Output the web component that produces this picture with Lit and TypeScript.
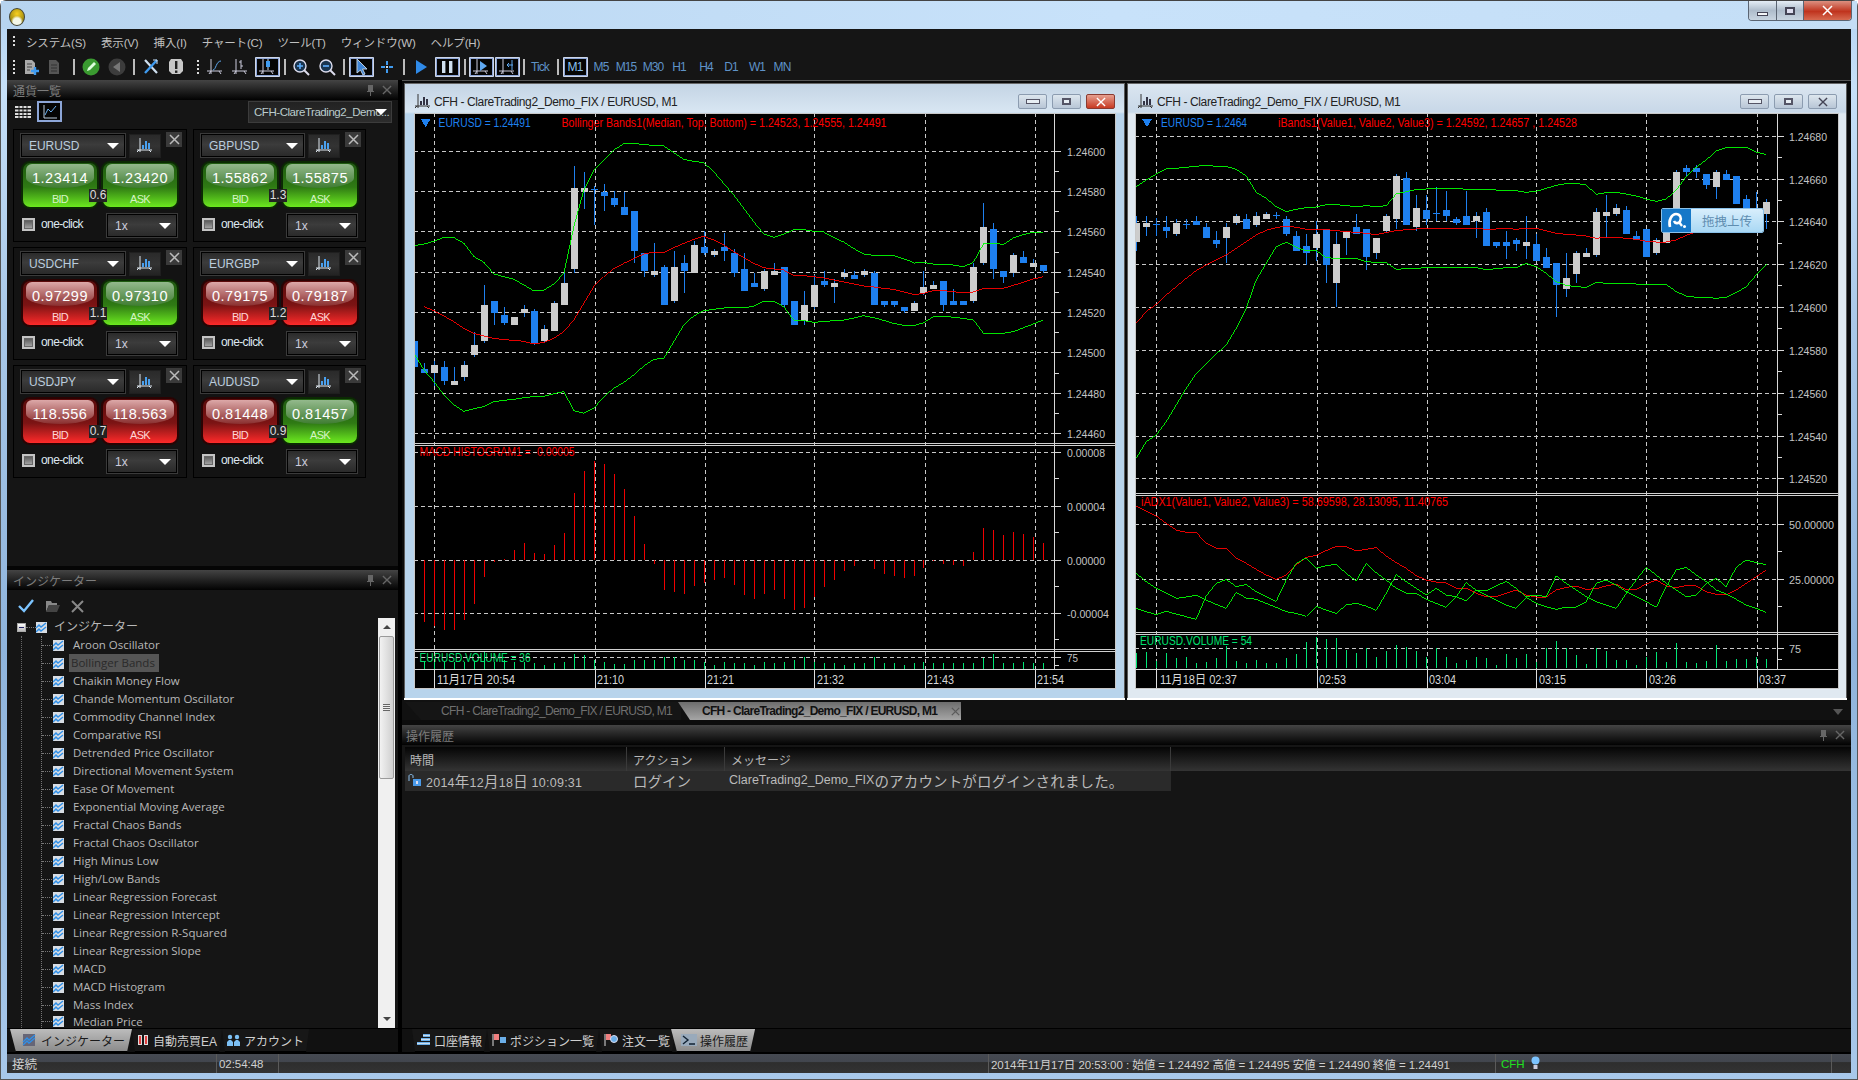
import { LitElement, html, css, svg } from "lit";
import { customElement, property } from "lit/decorators.js";

const SANS = css`"Liberation Sans","Noto Sans CJK JP",sans-serif`;

type Candle = [number, number, number, number, number];
interface Label { y: number; t: string; w: number; }
interface Cfg {
  title: string; active: boolean; vbX: number; vbW: number; x0: number; step: number; axisX: number;
  vlines: number[]; hMain: Label[]; hSub: Label[]; hVol: Label[]; ticks: number[]; seps: number[];
  candles: Candle[]; candleY: number;
  lines: { c: string; start: number; ys: number[]; base: number }[];
  hist?: number[]; histZero?: number; histBase?: number;
  vol: number[]; volBase: number; volScale: number;
  legends: { x: number; y: number; t: string; w: number; c: string }[];
  times: { x: number; t: string; w: number }[]; triX: number; labelX: number;
}

const c1: Candle[] = [[0,783,783,860,873],[0,850,868,878,880],[1,842,855,878,918],[0,843,862,903,915],[1,862,903,915,915],[1,843,855,890,903],[1,755,795,825,832],[1,615,675,783,789],[0,663,663,699,735],[0,681,705,729,735],[1,711,711,735,735],[1,675,687,699,711],[0,687,693,790,795],[1,735,747,783,789],[1,663,669,753,753],[1,580,609,675,675],[1,258,325,567,579],[1,276,325,335,387],[0,318,328,331,435],[0,312,335,347,393],[0,333,353,375,381],[0,335,381,405,405],[0,393,393,513,549],[0,519,519,573,591],[1,489,573,585,591],[0,555,561,675,675],[1,513,561,663,669],[0,525,549,573,639],[1,483,495,579,579],[0,453,501,519,525],[1,507,513,525,531],[0,459,501,513,543],[0,507,519,579,591],[0,519,567,633,633],[0,579,609,621,621],[1,567,573,627,633],[1,549,573,585,585],[0,561,561,675,681],[0,663,663,735,735],[1,633,675,723,735],[1,585,615,681,687],[0,573,603,615,621],[1,597,609,621,669],[1,567,579,591,597],[0,573,585,597,597],[1,567,573,585,591],[0,573,579,675,675],[0,663,663,675,681],[0,663,663,675,681],[0,681,681,693,699],[1,663,669,693,693],[1,573,621,639,645],[1,603,615,627,627],[0,603,603,675,693],[0,627,663,675,675],[0,663,663,675,675],[1,549,561,663,669],[1,369,441,549,555],[0,429,447,567,597],[0,573,573,591,609],[1,519,525,579,591],[0,513,531,549,549],[1,537,549,561,561],[0,555,555,573,579]];
const c2: Candle[] = [[1,408,429,485,512],[1,408,429,441,468],[0,414,432,435,468],[0,408,441,453,474],[1,417,429,462,468],[0,417,432,435,447],[0,408,423,435,435],[0,429,441,474,474],[0,453,480,492,504],[1,429,441,474,549],[1,402,408,429,435],[0,402,417,447,447],[1,396,408,435,441],[1,396,402,417,417],[0,396,405,408,417],[0,408,417,462,468],[0,453,468,513,513],[0,462,498,519,555],[1,424,462,504,543],[0,447,447,555,609],[1,456,492,609,682],[1,453,456,474,525],[0,402,441,462,462],[0,447,447,531,570],[1,474,474,519,537],[1,402,408,453,459],[1,282,288,417,447],[0,276,294,435,435],[1,345,384,441,453],[0,345,390,417,435],[0,321,399,402,423],[0,333,390,408,423],[0,411,417,429,435],[0,333,408,435,435],[1,396,408,423,474],[0,384,396,498,498],[0,486,486,498,504],[0,453,486,498,537],[0,474,480,492,513],[1,408,486,498,537],[0,462,492,543,543],[0,504,531,564,564],[0,549,549,615,710],[1,519,594,627,651],[1,513,519,582,609],[1,504,519,531,531],[1,384,396,525,531],[1,345,396,408,474],[1,372,384,402,408],[0,378,390,462,462],[0,453,468,480,480],[0,447,447,531,531],[1,474,480,519,525],[1,430,430,490,490],[1,270,276,400,400],[0,255,264,276,288],[0,255,264,276,294],[0,282,282,315,327],[1,270,276,321,357],[0,270,282,300,300],[0,288,288,372,372],[0,345,357,400,400],[0,336,385,400,400],[1,357,366,402,447]];

const W1: Cfg = {
  title: "CFH - ClareTrading2_Demo_FIX / EURUSD, M1", active: true, vbX: 414, vbW: 702, x0: 414, step: 9.99, axisX: 1054,
  vlines: [434, 595, 705, 814, 925, 1035],
  hMain: [[151,"1.24600"],[191,"1.24580"],[231,"1.24560"],[272,"1.24540"],[312,"1.24520"],[352,"1.24500"],[393,"1.24480"],[433,"1.24460"]].map(([y,t]) => ({ y: y as number, t: t as string, w: 38 })),
  hSub: [{ y: 452, t: "0.00008", w: 38 }, { y: 506, t: "0.00004", w: 38 }, { y: 560, t: "0.00000", w: 38 }, { y: 613, t: "-0.00004", w: 42 }],
  hVol: [{ y: 657, t: "75", w: 11 }],
  ticks: [171,211,252,292,332,373,413,478,532,586,639,665], seps: [443, 649],
  candles: c1, candleY: 80,
  lines: [
    { c: "#00ff00", start: 0, base: 80, ys: [497,492,484,472,473,490,530,547,582,590,598,615,633,630,612,580,440,330,270,240,210,191,190,194,196,198,218,238,244,248,275,310,345,385,425,462,472,463,449,449,454,456,472,486,505,522,526,526,527,537,549,547,552,553,555,560,547,492,490,493,474,464,456,457] },
    { c: "#00ff00", start: 0, base: 80, ys: [820,870,905,945,975,994,986,980,965,961,958,953,950,949,941,935,992,1000,985,950,925,907,885,858,838,835,785,735,708,692,688,684,682,684,678,664,664,680,720,722,727,725,722,720,714,707,713,721,730,736,736,728,710,708,712,715,720,760,761,760,755,743,732,720] },
    { c: "#ff0000", start: 1, base: 80, ys: [680,692,708,725,745,760,768,775,779,781,784,792,787,775,755,720,670,620,590,566,550,536,522,516,518,503,490,478,469,480,495,515,533,550,563,567,570,586,587,590,594,600,606,612,618,621,625,628,636,644,640,632,632,635,639,636,626,624,625,616,607,597,590] },
  ],
  hist: [537,575,587,599,599,570,521,441,395,387,360,339,369,372,345,309,189,123,93,101,132,177,258,342,402,480,486,491,468,460,450,444,465,495,507,492,480,507,540,534,501,471,450,423,408,390,417,432,438,444,438,414,393,402,405,408,366,294,300,315,306,312,321,339], histZero: 390, histBase: 430,
  vol: [700,695,697,697,697,697,693,666,695,690,695,695,700,705,700,697,672,674,690,695,702,702,690,690,690,682,682,690,690,695,705,695,700,700,705,695,700,695,690,682,695,700,700,705,700,700,682,700,700,705,698,695,700,700,700,700,700,684,672,700,698,696,700,700], volBase: 717, volScale: 430,
  legends: [
    { x: 438.6, y: 123, t: "EURUSD = 1.24491", w: 92, c: "#1e80f0" },
    { x: 561.5, y: 123, t: "Bollinger Bands1(Median, Top, Bottom) = 1.24523, 1.24555, 1.24491", w: 325, c: "#ff0000" },
    { x: 419.6, y: 452, t: "MACD HISTOGRAM1 = -0.00005", w: 155, c: "#ff0000" },
    { x: 419.6, y: 658, t: "EURUSD.VOLUME = 36", w: 111, c: "#00e070" },
  ],
  times: [{ x: 437, t: "11月17日 20:54", w: 78 }, { x: 597, t: "21:10", w: 27 }, { x: 707, t: "21:21", w: 27 }, { x: 817, t: "21:32", w: 27 }, { x: 927, t: "21:43", w: 27 }, { x: 1037, t: "21:54", w: 27 }],
  triX: 425.6, labelX: 1067,
};

const W2: Cfg = {
  title: "CFH - ClareTrading2_Demo_FIX / EURUSD, M1", active: false, vbX: 1135, vbW: 704, x0: 1136.2, step: 10, axisX: 1777,
  vlines: [1156, 1317, 1427, 1536, 1646, 1757],
  hMain: [[136,"1.24680"],[179,"1.24660"],[221,"1.24640"],[264,"1.24620"],[307,"1.24600"],[350,"1.24580"],[393,"1.24560"],[436,"1.24540"],[478,"1.24520"]].map(([y,t]) => ({ y: y as number, t: t as string, w: 38 })),
  hSub: [{ y: 524, t: "50.00000", w: 45 }, { y: 579, t: "25.00000", w: 45 }],
  hVol: [{ y: 648, t: "75", w: 12 }],
  ticks: [157,200,243,285,328,371,414,457,551,606,659], seps: [493, 632],
  candles: c2, candleY: 80,
  lines: [
    { c: "#00ff00", start: 0, base: 80, ys: [320,300,282,267,265,262,259,256,259,259,268,288,337,355,380,395,388,383,381,374,374,377,380,377,380,377,342,335,329,327,325,325,325,328,328,328,330,330,332,337,334,325,316,311,310,315,343,338,337,342,348,357,364,357,330,290,262,240,213,203,202,202,216,224] },
    { c: "#00ff00", start: 0, base: 80, ys: [1135,1085,1065,1025,975,925,880,850,822,795,745,685,600,550,500,487,502,512,512,533,535,535,535,545,547,548,568,566,565,563,563,563,563,563,563,569,566,563,563,550,560,580,605,616,620,622,607,610,610,611,612,613,613,613,635,648,652,652,655,652,638,620,585,553] },
    { c: "#ff0000", start: 0, base: 80, ys: [730,695,673,645,620,595,572,555,540,525,505,485,465,451,443,438,442,448,449,449,452,455,457,460,464,458,452,449,447,445,445,445,445,445,445,448,447,445,448,445,445,452,460,463,465,468,475,472,472,475,478,484,486,486,480,466,456,440,420,405,395,390,385] },
    { c: "#ff0000", start: 0, base: 480, ys: [78,93,108,130,150,157,157,190,204,204,235,250,268,285,298,285,255,232,226,212,199,200,213,208,203,228,248,265,287,300,306,309,325,325,340,350,350,340,330,345,351,351,330,322,318,328,326,318,312,330,328,312,300,318,323,317,318,335,343,345,330,310,290,270] },
    { c: "#00ff00", start: 0, base: 480, ys: [280,305,325,340,355,351,346,360,373,385,337,354,358,370,382,395,400,409,379,390,400,375,370,378,391,340,284,305,325,345,325,345,350,363,330,345,360,375,385,352,370,380,388,381,381,365,310,300,315,335,350,365,382,320,270,262,285,305,330,342,358,375,385,397] },
    { c: "#00ff00", start: 0, base: 480, ys: [385,395,404,394,402,410,418,348,310,298,320,314,335,350,364,300,250,234,265,257,253,280,303,251,278,300,325,340,340,358,370,382,350,308,330,332,318,304,325,350,345,350,288,310,330,350,365,375,385,340,300,262,285,310,330,350,346,310,295,320,262,240,248,254] },
  ],
  vol: [520,515,543,518,533,530,549,546,533,498,543,548,540,548,548,533,521,486,470,477,474,510,520,505,530,512,495,502,512,530,505,530,548,540,530,535,555,522,533,522,545,505,483,503,525,552,503,512,540,540,555,530,515,545,490,545,549,543,495,543,538,537,530,537], volBase: 565, volScale: 480,
  legends: [
    { x: 1161, y: 123, t: "EURUSD = 1.2464", w: 86, c: "#1e80f0" },
    { x: 1278, y: 123, t: "iBands1(Value1, Value2, Value3) = 1.24592, 1.24657 , 1.24528", w: 299, c: "#ff0000" },
    { x: 1141, y: 502, t: "iADX1(Value1, Value2, Value3) = 58.69598, 28.13095, 11.40765", w: 307, c: "#ff0000" },
    { x: 1140, y: 641, t: "EURUSD.VOLUME = 54", w: 112, c: "#00e070" },
  ],
  times: [{ x: 1160, t: "11月18日 02:37", w: 77 }, { x: 1319, t: "02:53", w: 27 }, { x: 1429, t: "03:04", w: 27 }, { x: 1539, t: "03:15", w: 27 }, { x: 1649, t: "03:26", w: 27 }, { x: 1759, t: "03:37", w: 27 }],
  triX: 1147, labelX: 1789,
};

const barIcon = (axis: string, bars: string) => html`<svg width="18" height="18" viewBox="0 0 18 18"><path d="M4 1v14M1 13h15" stroke=${axis} fill="none"/><path d="M7 12V8M10 12V4M13 12V6" stroke=${bars} stroke-width="2" fill="none"/><path d="M1 15l2-2M15 15l-2-2" stroke=${axis} fill="none"/></svg>`;
const xIcon = (col: string, s = 11) => html`<svg width=${s} height=${s} viewBox="0 0 11 11"><path d="M1 1l9 9M10 1l-9 9" stroke=${col} stroke-width="1.5" fill="none"/></svg>`;
const pinIcon = html`<svg width="9" height="12" viewBox="0 0 9 12"><path d="M2 1h5v6h1v1H1V7h1zM4 8h1v4H4z" fill="#666"/></svg>`;
const waveIcon = html`<svg width="11" height="11" viewBox="0 0 11 11"><rect width="11" height="11" fill="#d8dde4"/><path d="M0 6l3-3 2 2 5-4M0 10l3-3 2 2 5-4" stroke="#2f8fe8" stroke-width="1.4" fill="none"/></svg>`;
const ax = (inner: unknown) => svg`<path d="M5 1v15M1 13h15M3 16l2-3M15 16l-2-3" stroke="#ccd" fill="none"/>${inner}`;

function toolIcon(k: string) {
  const body: Record<string, unknown> = {
    grip: svg`<path d="M9 2v2M9 6v2M9 10v2M9 14v2" stroke="#ddd" stroke-width="2"/>`,
    new: svg`<path d="M3 2h7l3 3v11H3z" fill="#aaa"/><path d="M5 6h5M5 9h5M5 12h3" stroke="#444"/><path d="M13 9v8M9 13h8" stroke="#3f9bf0" stroke-width="2.4"/>`,
    doc: svg`<path d="M4 2h7l3 3v11H4z" fill="#555"/><path d="M6 7h6M6 10h6M6 13h6" stroke="#333"/>`,
    green: svg`<circle cx="9" cy="9" r="8.5" fill="#3a9a30"/><path d="M5 13l1-3 6-6 2 2-6 6z" fill="#dfd"/>`,
    gray: svg`<circle cx="9" cy="9" r="8.5" fill="#3c3c3c"/><path d="M12 4v10L5 9z" fill="#777"/>`,
    tools: svg`<path d="M3 2l12 13" stroke="#cfe0f0" stroke-width="2.2"/><path d="M15 2L3 15" stroke="#3f9bf0" stroke-width="2.4"/><path d="M11 2l4 0 0 4" stroke="#cfe0f0" fill="none"/>`,
    excl: svg`<path d="M4 1h10l2 3v9l-3 3H5l-3-3V4z" fill="#c8c8c8"/><rect x="8" y="3" width="2.4" height="8" fill="#222"/><rect x="8" y="12.500" width="2.4" height="2.4" fill="#222"/>`,
    line: ax(svg`<path d="M7 12c3 0 3-9 8-9" stroke="#5fa8f0" fill="none"/>`),
    bar: ax(svg`<path d="M10 2v9M8 4h2M10 8h2" stroke="#ccd" fill="none"/>`),
    candle: ax(svg`<path d="M10 1v11" stroke="#cde" /><rect x="8" y="3" width="4" height="6" fill="#3f9bf0"/>`),
    zin: svg`<circle cx="8" cy="8" r="6" fill="#1a3550" stroke="#dde" stroke-width="1.4"/><path d="M8 5v6M5 8h6" stroke="#5fb0ff" stroke-width="1.6"/><path d="M12 12l5 5" stroke="#dde" stroke-width="2"/>`,
    zout: svg`<circle cx="8" cy="8" r="6" fill="#1a3550" stroke="#dde" stroke-width="1.4"/><path d="M5 8h6" stroke="#5fb0ff" stroke-width="1.6"/><path d="M12 12l5 5" stroke="#dde" stroke-width="2"/>`,
    cursor: svg`<path d="M5 1v14l3.5-3 2.5 5 2-1-2.5-5H15z" fill="#3f86d8" stroke="#bcd"/>`,
    cross: svg`<path d="M9 3v4M9 11v4M3 9h4M11 9h4" stroke="#3f9bf0" stroke-width="2"/><rect x="8" y="8" width="2" height="2" fill="#cde"/>`,
    play: svg`<path d="M4 2l11 7-11 7z" fill="#2f8ae8"/>`,
    pause: svg`<rect x="4" y="3" width="3.4" height="12" fill="#cfe0f0"/><rect x="11" y="3" width="3.4" height="12" fill="#cfe0f0"/>`,
    step: ax(svg`<path d="M8 3l7 5-7 5z" fill="#5fa8f0"/>`),
    step2: ax(svg`<path d="M15 7H9M11 5L9 7l2 2M14 2v10" stroke="#5fa8f0" fill="none"/>`),
  };
  return html`<svg width="18" height="18" viewBox="0 0 18 18">${body[k]}</svg>`;
}

@customElement("chart-window")
class ChartWindow extends LitElement {
  @property({ attribute: false }) cfg!: Cfg;
  static styles = css`
    :host { display: block; }
    .win { height: 615px; box-sizing: border-box; display: flex; flex-direction: column; border: 1px solid #5a5a5a; border-top-color: #666; border-bottom: 0; background: linear-gradient(#dbe6f0, #c8d8e8 28px, #e0e9f1 30px); box-shadow: 0 2px 0 #fff; }
    .win.active { background: linear-gradient(#c4d4e4, #d8e6f2 28px, #b8d4ec 30px); }
    .tb { height: 29px; flex: none; display: flex; align-items: center; font: 12px ${SANS}; color: #222; padding-left: 9px; gap: 2px; padding-right: 9px; white-space: nowrap; }
    .tb .ttl { flex: 1; letter-spacing: -.38px; padding-top: 6px; }
    .tb svg { margin-top: 6px; }
    .btn { width: 29px; height: 15px; margin: 6px 0 0 3px; border: 1px solid #8c9cb0; border-radius: 2px; background: linear-gradient(#dde6ee, #b8c6d6); display: flex; align-items: center; justify-content: center; box-sizing: border-box; }
    .btn.red { background: linear-gradient(#e6a090, #c83a22); border-color: #8a3a30; }
    .btn svg { margin: 0; }
    .glyph-min { width: 12px; height: 3px; background: #e8eef4; border: 1px solid #556; }
    .glyph-max { width: 9px; height: 7px; border: 2px solid #556; background: #e8eef4; box-sizing: border-box; }
    .plot { position: relative; line-height: 0; margin: 0 9px 9px 9px; }
    .inact .plot { margin: 0 7px 9px 7px; }
    svg.chart { display: block; background: #000; }
    text { font-family: ${SANS}; font-size: 12.5px; }
    text.axl { font-size: 11.5px; }
  `;
  render() {
    const c = this.cfg;
    const top = 113, bot = 689, base = 669;
    const xAt = (i: number) => c.x0 + i * c.step;
    const dash = "4 3";
    const labels = [...c.hMain, ...c.hSub, ...c.hVol];
    return html`<div class="win ${c.active ? "active" : "inact"}">
      <div class="tb">${barIcon("#333", "#334")}<span class="ttl">${c.title}</span>
        <span class="btn"><span class="glyph-min"></span></span><span class="btn"><span class="glyph-max"></span></span>
        <span class="btn ${c.active ? "red" : ""}">${xIcon(c.active ? "#fff" : "#445", 10)}</span></div>
      <div class="plot">
        <svg class="chart" width=${c.vbW} height="576" viewBox="${c.vbX} ${top} ${c.vbW} 576" shape-rendering="crispEdges">
          ${c.legends.map((l) => svg`<text x=${l.x} y=${l.y + 4} fill=${l.c} textLength=${l.w} lengthAdjust="spacingAndGlyphs">${l.t}</text>`)}
          <path d="M${c.triX - 5} ${119}h10l-5 8z" fill="#1e80f0"/>
          ${labels.map((l) => svg`<path d="M${c.vbX} ${l.y + .5}H${c.axisX}" stroke="#c8c8c8" stroke-dasharray=${dash}/>`)}
          ${c.vlines.map((x) => svg`<path d="M${x + .5} ${top}V${base}" stroke="#c8c8c8" stroke-dasharray=${dash}/><path d="M${x + .5} ${base}V${bot}" stroke="#ddd"/>`)}
          ${c.candles.map((k, i) => {
            const x = Math.round(xAt(i)), Y = (z: number) => c.candleY + z / 3;
            const col = k[0] ? "#cccccc" : "#1e80f0";
            return svg`<path d="M${x + .5} ${Y(k[1])}V${Y(k[4])}" stroke="#1e80f0"/><rect x=${x - 3} y=${Y(k[2])} width="7" height=${Math.max(1, (k[3] - k[2]) / 3)} fill=${col}/>`;
          })}
          ${c.lines.map((l) => svg`<polyline fill="none" stroke=${l.c} stroke-width="0.9" points=${l.ys.map((y, i) => `${xAt(i + l.start)},${l.base + y / 3}`).join(" ")}/>`)}
          ${c.hist ? c.hist.map((y, i) => {
            const x = Math.round(xAt(i)) + .5, b = c.histBase!;
            return svg`<path d="M${x} ${b + c.histZero! / 3}V${b + y / 3}" stroke="#f00000"/>`;
          }) : ""}
          ${c.vol.map((y, i) => svg`<path d="M${Math.round(xAt(i)) + .5} ${c.volScale + c.volBase / 3}V${c.volScale + y / 3}" stroke="#00e676"/>`)}
          ${c.seps.map((y) => svg`<path d="M${c.vbX} ${y + .5}H${c.vbX + c.vbW}M${c.vbX} ${y + 2.5}H${c.vbX + c.vbW}" stroke="#d0d0d0"/>`)}
          <path d="M${c.vbX} ${base + .5}H${c.vbX + c.vbW}" stroke="#d8d8d8"/>
          <path d="M${c.axisX + .5} ${top}V${base}" stroke="#d8d8d8"/>
          ${labels.map((l) => svg`<path d="M${c.axisX} ${l.y + .5}h7" stroke="#d8d8d8"/><text class="axl" x=${c.labelX} y=${l.y + 4.5} fill="#c4c4c4" textLength=${l.w} lengthAdjust="spacingAndGlyphs">${l.t}</text>`)}
          ${c.ticks.map((y) => svg`<path d="M${c.axisX} ${y + .5}h5" stroke="#d8d8d8"/>`)}
          ${c.times.map((t) => svg`<text x=${t.x} y="684" fill="#d8d8d8" textLength=${t.w} lengthAdjust="spacingAndGlyphs">${t.t}</text>`)}
          <rect x=${c.vbX + .5} y=${top + .5} width=${c.vbW - 1} height="575" fill="none" stroke="#c8c8c8"/>
        </svg>
        <slot></slot>
      </div>
    </div>`;
  }
}

@customElement("pair-card")
class PairCard extends LitElement {
  @property() pair = "";
  @property() bid = "";
  @property() ask = "";
  @property() spread = "";
  @property() bidc = "green";
  @property() askc = "green";
  static styles = css`
    :host { display: block; }
    .card { height: 113px; box-sizing: border-box; border: 1px solid #000; background: #131313; padding: 4px 4px 0 7px; position: relative; }
    .r1 { display: flex; align-items: flex-start; }
    .sel { box-sizing: border-box; height: 23px; border: 1px solid #000; outline: 1px solid #3a3a3a; outline-offset: 0; background: linear-gradient(#2b2b2b, #3c3c3c 45%, #2a2a2a); color: #bcd; font: 12px ${SANS}; display: flex; align-items: center; justify-content: space-between; padding: 0 5px 0 7px; }
    .sel.a { width: 104px; letter-spacing: -.05px; }
    .sel.b { width: 70px; margin-top: 0; color: #ccd; }
    .arrow { width: 0; height: 0; border-left: 6px solid transparent; border-right: 6px solid transparent; border-top: 6px solid #fff; }
    .cb { width: 32px; height: 24px; margin-left: 4px; background: linear-gradient(#2a2a2a, #333 50%, #232323); border: 1px solid #1f1f1f; box-sizing: border-box; display: flex; align-items: center; justify-content: center; }
    .x { width: 16px; height: 15px; margin: -2px 0 0 5px; background: #3a3a3a; display: flex; align-items: center; justify-content: center; }
    .r2 { display: flex; gap: 6px; margin: 5px 0 0 2px; position: relative; }
    .p { width: 74px; height: 44px; border-radius: 7px; position: relative; overflow: hidden; color: #fff; display: flex; flex-direction: column; align-items: center; }
    .p.green { background: linear-gradient(#1f5a10, #2f7a14 55%, #6cea1f); box-shadow: 0 0 0 2px #0b2a03; }
    .p.red { background: linear-gradient(#5a0a0a, #7c1414 55%, #ff2a2a); box-shadow: 0 0 0 2px #2a0303; }
    .p::before { content: ""; position: absolute; left: 3px; right: 3px; top: 1px; height: 24px; border-radius: 6px 6px 50% 50% / 6px 6px 10px 10px; }
    .p.green::before { background: linear-gradient(#93b98c, #3f7d32); }
    .p.red::before { background: linear-gradient(#dca8a8, #8a2f2f); }
    .v { position: relative; font: 14.5px ${SANS}; letter-spacing: .5px; margin-top: 7px; line-height: 17px; }
    .l { position: relative; font: 11px ${SANS}; letter-spacing: -.7px; margin-top: 6px; line-height: 12px; }
    .p.green .l { color: #d5f5c5; }
    .p.red .l { color: #ffd6d6; }
    .sp { position: absolute; left: 66px; top: 26px; width: 18px; height: 13px; background: #222; color: #ddd; font: 12px/13px ${SANS}; text-align: center; }
    .r3 { display: flex; align-items: center; margin: 7px 0 0 1px; }
    .chk { width: 13px; height: 13px; box-sizing: border-box; border: 2px solid #c4c4c4; background: linear-gradient(#555, #aaa); outline: 1px solid #666; outline-offset: -3px; margin-top: -3px; }
    .one { color: #dfe8f0; font: 12px ${SANS}; margin: -3px 0 0 6px; width: 66px; letter-spacing: -.6px; }
  `;
  render() {
    return html`<div class="card">
      <div class="r1"><div class="sel a"><span>${this.pair}</span><span class="arrow"></span></div>
        <div class="cb">${barIcon("#dfe8f0", "#4aa0ee")}</div><div class="x">${xIcon("#bbb")}</div></div>
      <div class="r2">
        <div class="p ${this.bidc}"><span class="v">${this.bid}</span><span class="l">BID</span></div>
        <div class="p ${this.askc}"><span class="v">${this.ask}</span><span class="l">ASK</span></div>
        <span class="sp">${this.spread}</span>
      </div>
      <div class="r3"><span class="chk"></span><span class="one">one-click</span><div class="sel b"><span>1x</span><span class="arrow"></span></div></div>
    </div>`;
  }
}

const PAIRS = [
  ["EURUSD","1.23414","1.23420","0.6","green","green"],
  ["GBPUSD","1.55862","1.55875","1.3","green","green"],
  ["USDCHF","0.97299","0.97310","1.1","red","green"],
  ["EURGBP","0.79175","0.79187","1.2","red","red"],
  ["USDJPY","118.556","118.563","0.7","red","red"],
  ["AUDUSD","0.81448","0.81457","0.9","red","green"],
];
const INDICATORS = ["Aroon Oscillator","Bollinger Bands","Chaikin Money Flow","Chande Momentum Oscillator","Commodity Channel Index","Comparative RSI","Detrended Price Oscillator","Directional Movement System","Ease Of Movement","Exponential Moving Average","Fractal Chaos Bands","Fractal Chaos Oscillator","High Minus Low","High/Low Bands","Linear Regression Forecast","Linear Regression Intercept","Linear Regression R-Squared","Linear Regression Slope","MACD","MACD Histogram","Mass Index","Median Price"];
const MENU = ["システム(S)","表示(V)","挿入(I)","チャート(C)","ツール(T)","ウィンドウ(W)","ヘルプ(H)"];
type Tool = { x: number; k?: string; t?: string; a?: boolean; sep?: boolean };
const TOOLS: Tool[] = [
  { x: 14, k: "grip" },{ x: 31, k: "new" },{ x: 54, k: "doc" },{ x: 74, sep: true },{ x: 91, k: "green" },{ x: 117, k: "gray" },{ x: 134, sep: true },{ x: 151, k: "tools" },{ x: 176, k: "excl" },{ x: 198, k: "grip" },{ x: 215, k: "line" },{ x: 240, k: "bar" },{ x: 267, k: "candle", a: true },{ x: 285, sep: true },{ x: 301, k: "zin" },{ x: 327, k: "zout" },{ x: 344, sep: true },{ x: 361, k: "cursor", a: true },{ x: 387, k: "cross" },{ x: 404, sep: true },{ x: 421, k: "play" },{ x: 447, k: "pause", a: true },{ x: 465, sep: true },{ x: 481, k: "step", a: true },{ x: 507, k: "step2", a: true },{ x: 524, sep: true },{ x: 540, t: "Tick" },{ x: 558, sep: true },{ x: 575, t: "M1", a: true },{ x: 601, t: "M5" },{ x: 626, t: "M15" },{ x: 653, t: "M30" },{ x: 679, t: "H1" },{ x: 706, t: "H4" },{ x: 731, t: "D1" },{ x: 757, t: "W1" },{ x: 782, t: "MN" },
];

@customElement("app-root")
class AppRoot extends LitElement {
  static styles = css`
    :host { display: block; width: 1858px; height: 1080px; overflow: hidden; font-family: ${SANS}; }
    .frame { width: 1858px; height: 1080px; box-sizing: border-box; display: flex; flex-direction: column; border-top: 1px solid #444; border-left: 1px solid #555; border-right: 1px solid #555; border-bottom: 1px solid #555; border-radius: 6px 6px 0 0; background: linear-gradient(#b4d4f2, #c6e0f8 8%, #a9c8e8 30%, #8fb4dc 60%, #a8c8ea); }
    .cap { height: 28px; flex: none; display: flex; justify-content: space-between; align-items: flex-start; padding-left: 8px; background: linear-gradient(90deg, #b7d4ef, #c8e2fa 60%, #c4def6); }
    .orb { width: 16px; height: 18px; margin-top: 7px; border-radius: 50%; background: radial-gradient(circle at 50% 80%, #f4f8e8 0 26%, transparent 42%), radial-gradient(circle at 50% 30%, #f8d020, #8a7a10 78%); border: 1px solid #443; box-sizing: border-box; }
    .capbtns { display: flex; margin-right: 5px; height: 19px; border: 1px solid #5a6472; border-top: 0; border-radius: 0 0 4px 4px; overflow: hidden; }
    .cb { height: 19px; display: flex; align-items: center; justify-content: center; box-sizing: border-box; background: linear-gradient(#e4edf5, #aebccb 50%, #c8d4e0); border-right: 1px solid #5a6472; }
    .cb.mn { width: 28px; } .cb.mx { width: 27px; }
    .cb.cl { width: 47px; border: 0; background: linear-gradient(#dc9080, #c0341e 55%, #d66a50); }
    .g1 { width: 11px; height: 4px; background: #f4f6f8; border: 1px solid #445; box-sizing: border-box; margin-top: 6px; }
    .g2 { width: 10px; height: 8px; background: #dde; border: 2px solid #445; box-sizing: border-box; }
    .client { margin: 0 6px 0 6px; height: 1043px; flex: none; background: #000; display: flex; flex-direction: column; color: #bbb; }
    .menu { height: 25px; flex: none; background: #151515; display: flex; align-items: center; gap: 15px; padding-left: 19px; font-size: 11.5px; letter-spacing: -.15px; color: #c0c0c0; position: relative; white-space: nowrap; }
    .menu .gr { width: 2px; height: 12px; position: absolute; left: 6px; top: 7px; background: repeating-linear-gradient(#ddd 0 2px, transparent 2px 4px); }
    .tool { height: 26px; flex: none; background: #151515; display: flex; align-items: center; white-space: nowrap; }
    .ti { display: flex; align-items: center; justify-content: center; flex: none; height: 20px; box-sizing: border-box; }
    .ti.a { border: 2px solid #8da6d8; outline: 1px solid #cfd6e6; outline-offset: -1px; background: #050505; border-radius: 1px; }
    .ti.sep { width: 2px; height: 16px; background: #bbb; }
    .ti.txt { color: #5f93c8; font-size: 12px; letter-spacing: -.9px; }
    .ti.txt.a { color: #8cc0ee; }
    .main { height: 973px; flex: none; display: grid; grid-template-columns: 391px 1fr; column-gap: 4px; }
    .col { display: flex; flex-direction: column; min-width: 0; }
    .ph { height: 20px; flex: none; display: flex; align-items: center; padding: 0 6px; gap: 7px; font-size: 12px; color: #7d7d7d; background: linear-gradient(#444, #1f1f1f 55%, #020202); }
    .ph .name { flex: 1; }
    .panelA { height: 486px; flex: none; background: #151515; display: flex; flex-direction: column; }
    .bar { height: 29px; flex: none; display: flex; align-items: flex-start; padding: 1px 6px 0 8px; gap: 6px; box-sizing: border-box; }
    .bar > svg { margin-top: 5px; }
    .active-box { width: 25px; height: 21px; border: 2px solid #8da6d8; box-sizing: border-box; background: #050505; display: flex; align-items: center; justify-content: center; }
    .wide { margin-left: auto; width: 144px; height: 22px; box-sizing: border-box; border: 1px solid #3c3c3c; background: linear-gradient(#222, #2c2c2c); color: #bcc; font-size: 11.5px; letter-spacing: -.45px; padding: 0 2px 0 5px; display: flex; align-items: center; position: relative; white-space: nowrap; }
    .wide .arw { position: absolute; right: 4px; top: 7px; width: 0; height: 0; border-left: 6px solid transparent; border-right: 6px solid transparent; border-top: 6px solid #fff; }
    .cards { display: grid; grid-template-columns: 174px 173px; gap: 5px 6px; padding: 0 0 0 6px; }
    .gap { height: 4px; flex: none; background: #050505; }
    .panelB { height: 458px; flex: none; background: #151515; display: flex; flex-direction: column; }
    .tbar2 { height: 28px; flex: none; padding: 4px 0 0 11px; box-sizing: border-box; display: flex; align-items: center; gap: 11px; background: #151515; }
    .listwrap { flex: 1; min-height: 0; display: flex; margin: 0 3px 0 4px; }
    .tree { flex: 1; overflow: hidden; font: 11.5px "Open Sans", ${SANS}; color: #b8b8b8; position: relative; }
    .rootrow { height: 18px; display: flex; align-items: center; padding-left: 6px; color: #b8b8b8; white-space: nowrap; }
    .rootlab { margin-left: 7px; font: 12px "Noto Sans CJK JP", sans-serif; margin-top: -3px; }
    .minus { width: 9px; height: 9px; box-sizing: border-box; border: 1px solid #aaa; background: linear-gradient(#fff, #bbb); display: flex; align-items: center; justify-content: center; }
    .minus i { width: 5px; height: 1px; background: #226; display: block; }
    .dots { width: 10px; border-top: 1px dotted #777; flex: none; }
    .level1 { margin-left: 10px; border-left: 1px dotted #666; padding-left: 19px; }
    .level2 { border-left: 1px dotted #777; }
    .row { height: 18px; display: flex; align-items: center; white-space: nowrap; }
    .row:last-child { height: 14px; align-items: flex-end; }
    .row:last-child span.lab { line-height: 13px; }
    .row:last-child svg { margin-bottom: 1px; }
    .row:last-child .dots { margin-bottom: 6px; }
    .row .dots { margin-right: 1px; }
    .row span.lab { margin-left: 7px; padding: 0 2px; line-height: 18px; }
    .row.sel span.lab { background: #555; color: #2a2a2a; margin-left: 5px; padding: 0 4px 0 2px; }
    .sb { width: 17px; flex: none; background: #f0f0f0; display: flex; flex-direction: column; align-items: center; position: relative; }
    .sb .up, .sb .dn { height: 18px; display: flex; align-items: center; justify-content: center; flex: none; }
    .tri-u { width: 0; height: 0; border-left: 4px solid transparent; border-right: 4px solid transparent; border-bottom: 4px solid #444; }
    .tri-d { width: 0; height: 0; border-left: 4px solid transparent; border-right: 4px solid transparent; border-top: 4px solid #444; }
    .thumb { width: 15px; height: 143px; box-sizing: border-box; border: 1px solid #9a9a9a; border-radius: 2px; background: linear-gradient(90deg, #f2f2f2, #cfcfcf); display: flex; align-items: center; justify-content: center; flex: none; }
    .thumb i { width: 7px; height: 7px; display: block; background: repeating-linear-gradient(#666 0 1px, #eee 1px 2px); }
    .sp { flex: 1; }
    .tabs { height: 23px; margin-top: 1px; flex: none; display: flex; align-items: center; background: #111; font-size: 12px; color: #d0d0d0; white-space: nowrap; padding-left: 3px; }
    .tabs.rt { padding-left: 10px; }
    .tab { height: 23px; display: flex; align-items: center; box-sizing: border-box; border-bottom: 1px solid #000; }
    .tab svg { flex: none; }
    .tab.on { padding: 0 7px 0 12px; gap: 5px; background: linear-gradient(#bcbcbc, #8c8c8c); color: #1a1a1a; clip-path: polygon(0 0, 100% 0, calc(100% - 5px) 100%, 6px 100%); }
    .tab.off { padding: 0 5px 0 4px; gap: 3px; background: #171717; clip-path: polygon(0 0, 100% 0, calc(100% - 3px) 100%, 3px 100%); }
    .tab.off + .tab.on { margin-left: -4px; padding-left: 9px; gap: 2px; }
    .right { min-width: 0; }
    .mdi { height: 620px; flex: none; box-sizing: border-box; border-top: 1px solid #555; padding: 2px 4px 0 2px; display: flex; gap: 2px; background: #0a0a0a; }
    .mdi chart-window:first-child { width: 721px; }
    .mdi chart-window:nth-child(2) { width: 720px; }
    .doctabs { height: 20px; flex: none; display: flex; align-items: flex-end; background: #111; font-size: 12px; white-space: nowrap; position: relative; padding-left: 3px; }
    .dt { height: 18px; display: flex; align-items: center; box-sizing: border-box; }
    .dt.off { width: 276px; padding-left: 36px; letter-spacing: -.68px; color: #707070; background: #151515; clip-path: polygon(0 0, 100% 0, 100% 100%, 16px 100%); }
    .dt.on { width: 283px; padding-left: 24px; margin-left: -3px; color: #111; font-weight: 700; letter-spacing: -.72px; background: linear-gradient(#6d6d6d, #a5a5a5); clip-path: polygon(0 0, 100% 0, 100% 100%, 12px 100%); gap: 14px; }
    .dt.on svg { opacity: .9; }
    .dtarr { position: absolute; right: 8px; top: 9px; width: 0; height: 0; border-left: 5px solid transparent; border-right: 5px solid transparent; border-top: 6px solid #555; }
    .pgap { height: 5px; flex: none; background: #0c0c0c; }
    .panelC { height: 303px; flex: none; background: #151515; display: flex; flex-direction: column; }
    .panelC .ph { padding: 0 6px 0 4px; }
    .hdr, .rowh { display: grid; grid-template-columns: 222px 98px 446px 1fr; }
    .hdr { height: 24px; margin-top: 2px; margin-left: 3px; flex: none; background: linear-gradient(#050505, #343434); font-size: 12px; color: #b8b8b8; align-items: stretch; }
    .hdr div { display: flex; align-items: center; padding-left: 6px; border-right: 1px solid #3a3a3a; box-sizing: border-box; }
    .hdr div:first-child { padding-left: 5px; }
    .hdr div.blank { border: 0; }
    .rowh { height: 20px; flex: none; margin-left: 3px; font-size: 12.5px; color: #bbb; align-items: center; }
    .rowh > div { background: #2a2a2a; height: 20px; display: flex; align-items: center; padding: 0 0 2px 6px; white-space: nowrap; box-sizing: border-box; }
    .rowh > div.none { background: transparent; }
    .rowh > div:first-child { padding-left: 3px; gap: 4px; letter-spacing: .25px; }
    .rowh > div.msg { padding-left: 4px; }
    .rowh > div.msg .jp { letter-spacing: .15px; }
    .jp { font-size: 14.5px; }
    .status { height: 19px; flex: none; margin-top: 1px; display: flex; align-items: stretch; font-size: 11.5px; letter-spacing: -.05px; color: #d0d0d0; background: linear-gradient(#464a52, #42464e 42%, #2e2e2e 45%, #333); white-space: nowrap; }
    .status .s { display: flex; align-items: center; box-sizing: border-box; padding-left: 2px; border-right: 1px solid #5a5a5a; }
    .s.s1 { width: 210px; padding-left: 5px; font-size: 12.5px; }
    .s.s2 { width: 62px; }
    .s.s3 { width: 710px; }
    .s.s4 { width: 507px; }
    .s.s5 { width: 336px; padding-left: 5px; gap: 6px; }
    .cfh { color: #20e020; }
    .fill { flex: 1; }
    .bottomframe { flex: 1; }
    .drag { position: absolute; left: 526px; top: 95px; width: 103px; height: 25px; display: flex; border: 1px solid #8ac0e8; box-sizing: border-box; border-radius: 2px; overflow: hidden; line-height: normal; z-index: 3; }
    .drag .ic { width: 29px; background: #1678c8; display: flex; align-items: center; justify-content: center; flex: none; }
    .drag .tx { flex: 1; background: linear-gradient(#d8eefc, #a9d8f4); color: #5f8db0; font: 12.5px "Noto Sans CJK SC", sans-serif; display: flex; align-items: center; justify-content: center; letter-spacing: 0; }
  `;
  private tab(label: string, on: boolean, icon: unknown) {
    return html`<div class="tab ${on ? "on" : "off"}">${icon}<span>${label}</span></div>`;
  }
  render() {
    let prev = 7;
    const widths = (t: Tool) => (t.sep ? 2 : t.a ? 25 : t.t ? (t.t.length > 2 ? 20 : 18) : 18);
    const toolItems = TOOLS.map((t) => {
      const w = widths(t);
      const ml = t.x - w / 2 - prev;
      prev = t.x + w / 2;
      const cls = `ti ${t.sep ? "sep" : ""} ${t.a ? "a" : ""} ${t.t ? "txt" : ""}`;
      return html`<div class=${cls} style="margin-left:${ml}px;width:${w}px">${t.k ? toolIcon(t.k) : ""}${t.t ?? ""}</div>`;
    });
    const tabIcon = (c: string) => html`<svg width="14" height="14" viewBox="0 0 14 14"><rect x="1" y="1" width="12" height="12" fill=${c}/><path d="M1 9l4-4 2 2 6-5M1 12l4-4 2 2 6-5" stroke="#2f8fe8" stroke-width="1.4" fill="none"/></svg>`;
    const eaIcon = html`<svg width="14" height="14" viewBox="0 0 14 14"><path d="M2 2h4v10H2zM8 2h4v10H8z" fill="#ddd"/><path d="M4 3v8M10 3v8" stroke="#e04040" stroke-width="2"/></svg>`;
    const acctIcon = html`<svg width="15" height="14" viewBox="0 0 15 14"><circle cx="4" cy="4" r="2.2" fill="#7cc0f4"/><circle cx="11" cy="4" r="2.2" fill="#7cc0f4"/><path d="M1 13V9l2-2h2l2 2v4zM8 13V9l2-2h2l2 2v4z" fill="#7cc0f4"/></svg>`;
    const coinIcon = html`<svg width="15" height="14" viewBox="0 0 15 14"><path d="M7 1h7v3H7zM5 5h9v3H5zM1 9h13v3H1z" fill="#6aaee8"/><path d="M7 2.5h7M5 6.500h9M1 10.500h13" stroke="#cde" fill="none"/></svg>`;
    const flagIcon = html`<svg width="16" height="14" viewBox="0 0 16 14"><path d="M2 1v12" stroke="#ddd"/><path d="M3 1h5v6H3z" fill="#f08080"/><path d="M9 4h6v6H9z" fill="#6aaee8"/></svg>`;
    const flag2Icon = html`<svg width="16" height="14" viewBox="0 0 16 14"><path d="M2 1v12" stroke="#ddd"/><path d="M3 1h5v6H3z" fill="#f08080"/><circle cx="11" cy="6" r="3.500" fill="#6aaee8" stroke="#dde"/></svg>`;
    const termIcon = html`<svg width="18" height="14" viewBox="0 0 18 14"><rect x="1" y="1" width="16" height="12" fill="#9ab"/><path d="M3 3l5 4-5 4M9 11h6" stroke="#123" stroke-width="1.4" fill="none"/></svg>`;
    const lockIcon = html`<svg width="14" height="14" viewBox="0 0 14 14"><path d="M1 8V3c0-2 4-2 4 0v2" stroke="#8cc0ee" fill="none"/><rect x="5" y="6" width="8" height="7" fill="#4a9ae8"/><rect x="8" y="8" width="2" height="3" fill="#dde"/></svg>`;
    return html`<div class="frame">
      <div class="cap"><div class="orb"></div>
        <div class="capbtns"><div class="cb mn"><span class="g1"></span></div><div class="cb mx"><span class="g2"></span></div><div class="cb cl">${xIcon("#fff", 11)}</div></div>
      </div>
      <div class="client">
        <div class="menu"><span class="gr"></span>${MENU.map((m) => html`<span>${m}</span>`)}</div>
        <div class="tool">${toolItems}</div>
        <div class="main">
          <div class="col">
            <section class="panelA">
              <div class="ph"><span class="name">通貨一覧</span>${pinIcon}${xIcon("#666", 10)}</div>
              <div class="bar">
                <svg width="16" height="12" viewBox="0 0 16 12"><path d="M0 1h16M0 4.500h16M0 8h16M0 11h16" stroke="#ddd" stroke-width="2"/><path d="M4 0v12M8 0v12M12 0v12" stroke="#151515"/></svg>
                <div class="active-box"><svg width="16" height="15" viewBox="0 0 16 15"><path d="M2 1v13h13" stroke="#bcd" fill="none"/><path d="M3 11l3-6 3 3 5-6" stroke="#6ab0f0" fill="none"/></svg></div>
                <div class="wide">CFH-ClareTrading2_Demo...<span class="arw"></span></div>
              </div>
              <div class="cards">${PAIRS.map((p) => html`<pair-card pair=${p[0]} bid=${p[1]} ask=${p[2]} spread=${p[3]} bidc=${p[4]} askc=${p[5]}></pair-card>`)}</div>
            </section>
            <div class="gap"></div>
            <section class="panelB">
              <div class="ph"><span class="name">インジケーター</span>${pinIcon}${xIcon("#666", 10)}</div>
              <div class="tbar2">
                <svg width="16" height="14" viewBox="0 0 16 14"><path d="M1 7l5 5 9-11" stroke="#7cc4ff" stroke-width="2.4" fill="none"/></svg>
                <svg width="15" height="13" viewBox="0 0 15 13"><path d="M1 1h5l1 2h5v2H4L1 12z" fill="#888"/><path d="M4 5h11l-3 7H1z" fill="#444"/></svg>
                <svg width="13" height="13" viewBox="0 0 13 13"><path d="M1 1l11 11M12 1L1 12" stroke="#888" stroke-width="2" fill="none"/></svg>
              </div>
              <div class="listwrap">
                <div class="tree">
                  <div class="rootrow"><span class="minus"><i></i></span><span class="dots"></span>${waveIcon}<span class="rootlab">インジケーター</span></div>
                  <div class="level1"><div class="level2">
                    ${INDICATORS.map((n, i) => html`<div class="row ${i === 1 ? "sel" : ""}"><span class="dots"></span>${waveIcon}<span class="lab">${n}</span></div>`)}
                  </div></div>
                </div>
                <div class="sb"><div class="up"><span class="tri-u"></span></div><div class="thumb"><i></i></div><div class="sp"></div><div class="dn"><span class="tri-d"></span></div></div>
              </div>
            </section>
            <div class="tabs">
              ${this.tab("インジケーター", true, tabIcon("#667"))}
              ${this.tab("自動売買EA", false, eaIcon)}
              ${this.tab("アカウント", false, acctIcon)}
            </div>
          </div>
          <div class="col right">
            <div class="mdi">
              <chart-window .cfg=${W1}></chart-window>
              <chart-window .cfg=${W2}><div class="drag"><span class="ic"><svg width="20" height="17" viewBox="0 0 20 17"><path d="M3 15C1 8 5 2 9 2c4 0 6 4 4 7.500-1.500 2.500-5 2-6-.5" fill="none" stroke="#fff" stroke-width="2.6"/><path d="M12 10l3 4" stroke="#fff" stroke-width="2.4"/><circle cx="17.500" cy="14.500" r="1.500" fill="#fff"/></svg></span><span class="tx">拖拽上传</span></div></chart-window>
            </div>
            <div class="doctabs">
              <div class="dt off">CFH - ClareTrading2_Demo_FIX / EURUSD, M1</div>
              <div class="dt on"><span>CFH - ClareTrading2_Demo_FIX / EURUSD, M1</span>${xIcon("#555", 9)}</div>
              <span class="dtarr"></span>
            </div>
            <div class="pgap"></div>
            <section class="panelC">
              <div class="ph"><span class="name">操作履歴</span>${pinIcon}${xIcon("#666", 10)}</div>
              <div class="hdr"><div>時間</div><div>アクション</div><div>メッセージ</div><div class="blank"></div></div>
              <div class="rowh"><div>${lockIcon}<span>2014<span class="jp">年</span>12<span class="jp">月</span>18<span class="jp">日</span> 10:09:31</span></div><div class="jp">ログイン</div><div class="msg"><span>ClareTrading2_Demo_FIX</span><span class="jp">のアカウントがログインされました。</span></div><div class="none"></div></div>
            </section>
            <div class="tabs rt">
              ${this.tab("口座情報", false, coinIcon)}
              ${this.tab("ポジション一覧", false, flagIcon)}
              ${this.tab("注文一覧", false, flag2Icon)}
              ${this.tab("操作履歴", true, termIcon)}
            </div>
          </div>
        </div>
        <div class="status">
          <div class="s s1">接続</div>
          <div class="s s2">02:54:48</div>
          <div class="s s3"></div>
          <div class="s s4">2014年11月17日 20:53:00 : 始値 = 1.24492 高値 = 1.24495 安値 = 1.24490 終値 = 1.24491</div>
          <div class="s s5"><span class="cfh">CFH</span><svg width="9" height="15" viewBox="0 0 9 15"><circle cx="4.500" cy="4.500" r="4" fill="#7cc4ff"/><rect x="2.500" y="9" width="4" height="4" fill="#ccd"/></svg></div>
          <div class="fill"></div>
        </div>
      </div>
      <div class="bottomframe"></div>
    </div>`;
  }
}
